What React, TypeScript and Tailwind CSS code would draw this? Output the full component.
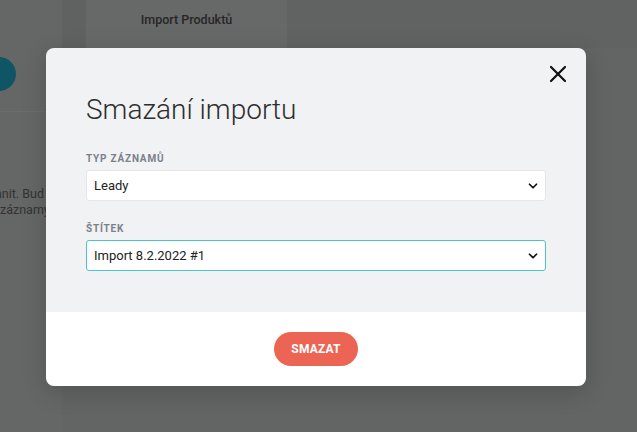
import { X, ChevronDown } from "lucide-react";

const font = { fontFamily: "Roboto, 'Noto Sans', sans-serif" };

function Select({ value, active }: { value: string; active?: boolean }) {
  return (
    <div
      className={`flex items-center justify-between h-[31px] pl-[7px] pr-[5px] bg-white rounded-[3px] border ${
        active ? "border-[#4cc3cb]" : "border-[#e4e6ea]"
      }`}
    >
      <span className="text-[13px] text-[#222]">{value}</span>
      <ChevronDown className="w-3.5 h-3.5 text-[#111]" strokeWidth={3} />
    </div>
  );
}

export default function App() {
  return (
    <div className="relative w-[637px] h-[432px] overflow-hidden bg-[#636464]" style={font}>
      {/* dimmed page behind */}
      <div className="flex flex-col h-full">
        <div className="flex h-[48px]">
          <div className="w-[62px] bg-[#656666]" />
          <div className="w-[24px] bg-[#606161]" />
          <div className="w-[201px] bg-[#676868] flex justify-center pt-[11px]">
            <span className="text-[12.5px] font-medium text-[#262626]">Import Produktů</span>
          </div>
          <div className="flex-1 bg-[#616262]" />
        </div>
        <div className="flex flex-1">
          <div className="w-[62px] bg-[#656666] flex flex-col">
            <div className="h-[64px] border-b border-[#6a6b6b] pt-[9px]">
              <div className="w-[34px] h-[34px] -ml-[18px] rounded-full bg-[#0f5565]" />
            </div>
            <div className="pt-[74px] text-[12.5px] leading-[16px] text-[#333] whitespace-nowrap -ml-[5px]">
              <div>anit. Bud</div>
              <div className="pl-[5px]">záznamy</div>
            </div>
          </div>
          <div className="flex-1 bg-[#636464]" />
        </div>
      </div>

      {/* modal */}
      <div className="absolute left-[46px] top-[48px] w-[540px] h-[338px] rounded-[8px] overflow-hidden flex flex-col shadow-[0_6px_24px_rgba(0,0,0,0.18)]">
        <div className="relative bg-[#f1f2f4] h-[264px] px-[40px] pt-[46px]">
          <button className="absolute right-[14px] top-[12px] text-[#111]">
            <X className="w-[28px] h-[28px]" strokeWidth={1.9} />
          </button>
          <h2 className="text-[28px] font-light text-[#2e2e2e] leading-[32px]">Smazání importu</h2>
          <div className="mt-[27px] text-[10px] font-bold tracking-[0.8px] text-[#7b808b] leading-[11px]">TYP ZÁZNAMŮ</div>
          <div className="mt-[6px]">
            <Select value="Leady" />
          </div>
          <div className="mt-[22px] text-[10px] font-bold tracking-[0.8px] text-[#7b808b] leading-[11px]">ŠTÍTEK</div>
          <div className="mt-[6px]">
            <Select value="Import 8.2.2022 #1" active />
          </div>
        </div>
        <div className="flex-1 bg-white flex items-center justify-center">
          <button className="w-[84px] h-[34px] rounded-full bg-[#ec6454] text-white text-[12px] font-bold tracking-[0.2px]">
            SMAZAT
          </button>
        </div>
      </div>
    </div>
  );
}
